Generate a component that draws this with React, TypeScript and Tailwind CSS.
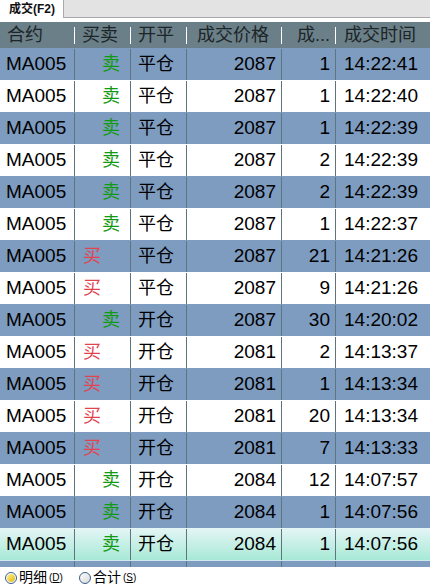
import React from 'react';

type Trade = {
  code: string;
  side: 'buy' | 'sell';
  action: string;
  price: number;
  qty: number;
  time: string;
};

const trades: Trade[] = [
  { code: 'MA005', side: 'sell', action: '平仓', price: 2087, qty: 1, time: '14:22:41' },
  { code: 'MA005', side: 'sell', action: '平仓', price: 2087, qty: 1, time: '14:22:40' },
  { code: 'MA005', side: 'sell', action: '平仓', price: 2087, qty: 1, time: '14:22:39' },
  { code: 'MA005', side: 'sell', action: '平仓', price: 2087, qty: 2, time: '14:22:39' },
  { code: 'MA005', side: 'sell', action: '平仓', price: 2087, qty: 2, time: '14:22:39' },
  { code: 'MA005', side: 'sell', action: '平仓', price: 2087, qty: 1, time: '14:22:37' },
  { code: 'MA005', side: 'buy', action: '平仓', price: 2087, qty: 21, time: '14:21:26' },
  { code: 'MA005', side: 'buy', action: '平仓', price: 2087, qty: 9, time: '14:21:26' },
  { code: 'MA005', side: 'sell', action: '开仓', price: 2087, qty: 30, time: '14:20:02' },
  { code: 'MA005', side: 'buy', action: '开仓', price: 2081, qty: 2, time: '14:13:37' },
  { code: 'MA005', side: 'buy', action: '开仓', price: 2081, qty: 1, time: '14:13:34' },
  { code: 'MA005', side: 'buy', action: '开仓', price: 2081, qty: 20, time: '14:13:34' },
  { code: 'MA005', side: 'buy', action: '开仓', price: 2081, qty: 7, time: '14:13:33' },
  { code: 'MA005', side: 'sell', action: '开仓', price: 2084, qty: 12, time: '14:07:57' },
  { code: 'MA005', side: 'sell', action: '开仓', price: 2084, qty: 1, time: '14:07:56' },
  { code: 'MA005', side: 'sell', action: '开仓', price: 2084, qty: 1, time: '14:07:56' },
];

const font = { fontFamily: '"Liberation Sans", "Noto Sans CJK SC", sans-serif' };

function HeaderSep() {
  return <div className="w-px h-[17px] bg-white shrink-0" />;
}

function TradeRow({ t, index, selected }: { t: Trade; index: number; selected?: boolean }) {
  const bg = selected
    ? 'bg-gradient-to-b from-[#e4f5f6] to-[#a6e9d5]'
    : index % 2 === 0
      ? 'bg-[#7d9cc0]'
      : 'bg-white';
  const cell = 'h-full flex items-center border-r border-[#5d757c] shrink-0';
  return (
    <div className={`flex h-8 text-[19px] text-black pt-px ${bg}`}>
      <div className={`${cell} w-[75px] pl-[6px]`}>{t.code}</div>
      <div className={`${cell} w-[56px] ${t.side === 'sell' ? 'pl-[27px] text-[#139a13]' : 'pl-[8px] text-[#e2434f]'}`}>
        <span className="text-[18px]">{t.side === 'sell' ? '卖' : '买'}</span>
      </div>
      <div className={`${cell} w-[56px] pl-[7px]`}>
        <span className="text-[18px]">{t.action}</span>
      </div>
      <div className={`${cell} w-[95px] justify-end pr-[5px]`}>{t.price}</div>
      <div className={`${cell} w-[54px] justify-end pr-[5px]`}>{t.qty}</div>
      <div className="h-full flex items-center flex-1 pl-[8px]">{t.time}</div>
    </div>
  );
}

export default function App() {
  return (
    <div className="w-[430px] h-[588px] bg-white overflow-hidden flex flex-col" style={font}>
      {/* Tab bar */}
      <div className="h-[18px] bg-[#e3e3e3] border-b border-[#a9a9a9] flex items-end shrink-0">
        <div className="h-[19px] w-[64px] bg-white border-r border-[#a9a9a9] flex items-center pl-[9px] -mb-px text-[12px] font-bold text-[#111]">
          成交(F2)
        </div>
      </div>
      <div className="h-[4px] shrink-0" />

      {/* Header */}
      <div className="h-[26px] bg-[#6a7f87] flex items-center text-[18px] text-[#1d2528] shrink-0">
        <div className="w-[74px] pl-[7px]">合约</div>
        <HeaderSep />
        <div className="w-[55px] pl-[7px]">买卖</div>
        <HeaderSep />
        <div className="w-[55px] pl-[7px]">开平</div>
        <HeaderSep />
        <div className="w-[94px] pl-[10px]">成交价格</div>
        <HeaderSep />
        <div className="w-[53px] pl-[15px]">成...</div>
        <HeaderSep />
        <div className="flex-1 pl-[8px]">成交时间</div>
      </div>

      {/* Rows */}
      {trades.map((t, i) => (
        <TradeRow key={i} t={t} index={i} selected={i === trades.length - 1} />
      ))}

      {/* partial next row */}
      <div className="flex h-[7px] bg-[#7d9cc0] border-t border-[#cfe8ee] shrink-0">
        <div className="w-[75px] border-r border-[#5d757c]" />
        <div className="w-[56px] border-r border-[#5d757c]" />
        <div className="w-[56px] border-r border-[#5d757c]" />
        <div className="w-[95px] border-r border-[#5d757c]" />
        <div className="w-[54px] border-r border-[#5d757c]" />
      </div>

      {/* Footer */}
      <div className="flex-1 flex items-center gap-[16px] pl-[5px] text-[14px] text-black">
        <label className="flex items-center">
          <span className="w-[12px] h-[12px] rounded-full border border-[#3a5d8a] bg-white flex items-center justify-center">
            <span className="w-[8px] h-[8px] rounded-full bg-gradient-to-br from-[#fff27a] to-[#e2b800]" />
          </span>
          <span className="ml-[2px]">明细</span>
          <span className="text-[10px] ml-[2px]">(<u>D</u>)</span>
        </label>
        <label className="flex items-center">
          <span className="w-[12px] h-[12px] rounded-full border border-[#3a5d8a] bg-gradient-to-br from-white to-[#d8d8d8]" />
          <span className="ml-[2px]">合计</span>
          <span className="text-[10px] ml-[2px]">(<u>S</u>)</span>
        </label>
      </div>
    </div>
  );
}
